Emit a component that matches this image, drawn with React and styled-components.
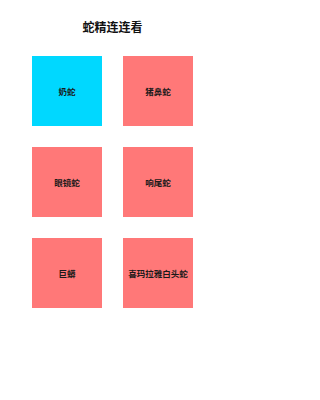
import React from "react";
import styled, { createGlobalStyle } from "styled-components";

const GlobalStyle = createGlobalStyle`
  body {
    margin: 0;
    background: #fff;
    font-family: "Noto Sans CJK SC", "Noto Sans", sans-serif;
  }
`;

const Page = styled.div`
  width: 225px;
  display: flex;
  flex-direction: column;
  align-items: center;
  padding-top: 19px;
`;

const Title = styled.h1`
  margin: 0;
  font-size: 12px;
  line-height: 16px;
  font-weight: 700;
  color: #111;
`;

const Grid = styled.div`
  display: grid;
  grid-template-columns: repeat(2, 70px);
  gap: 21px;
  margin-top: 21px;
`;

const Tile = styled.div`
  width: 70px;
  height: 70px;
  display: flex;
  align-items: center;
  justify-content: center;
  background: ${(props) => (props.active ? "#00d8ff" : "#ff7878")};
  color: #1a1a1a;
  font-size: 8.5px;
  font-weight: 700;
`;

const snakes = ["奶蛇", "猪鼻蛇", "眼镜蛇", "响尾蛇", "巨蟒", "喜玛拉雅白头蛇"];

function App() {
  return (
    <Page>
      <GlobalStyle />
      <Title>蛇精连连看</Title>
      <Grid>
        {snakes.map((name, index) => (
          <Tile key={name} active={index === 0}>
            {name}
          </Tile>
        ))}
      </Grid>
    </Page>
  );
}

export default App;
